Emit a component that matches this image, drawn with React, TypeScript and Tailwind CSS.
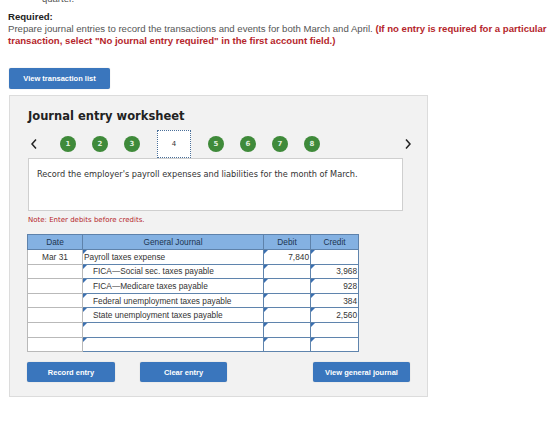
import React from "react";

type Line = { date: string; account: string; debit: string; credit: string; indent: boolean };

const lines: Line[] = [
  { date: "Mar 31", account: "Payroll taxes expense", debit: "7,840", credit: "", indent: false },
  { date: "", account: "FICA\u2014Social sec. taxes payable", debit: "", credit: "3,968", indent: true },
  { date: "", account: "FICA\u2014Medicare taxes payable", debit: "", credit: "928", indent: true },
  { date: "", account: "Federal unemployment taxes payable", debit: "", credit: "384", indent: true },
  { date: "", account: "State unemployment taxes payable", debit: "", credit: "2,560", indent: true },
  { date: "", account: "", debit: "", credit: "", indent: false },
  { date: "", account: "", debit: "", credit: "", indent: false },
];

const steps = [1, 2, 3, 4, 5, 6, 7, 8];

function Marker() {
  return (
    <span className="absolute left-0 top-0 h-0 w-0 border-t-[4px] border-r-[4px] border-t-[#3a6fb0] border-r-transparent" />
  );
}

function Chevron({ dir }: { dir: "left" | "right" }) {
  return (
    <svg width="8" height="12" viewBox="0 0 8 12" className="shrink-0">
      <path
        d={dir === "left" ? "M6 1.5 L2 6 L6 10.5" : "M2 1.5 L6 6 L2 10.5"}
        fill="none"
        stroke="#222"
        strokeWidth="1.5"
      />
    </svg>
  );
}

function BlueButton({ label, className }: { label: string; className: string }) {
  return (
    <button
      className={`${className} block h-[20px] rounded-[2px] bg-[#3a76bd] text-[7.5px] font-bold text-white shadow-[0_0_1px_rgba(0,0,0,0.3)]`}
    >
      {label}
    </button>
  );
}

export default function App() {
  return (
    <div className="h-[422px] w-[560px] overflow-hidden bg-white font-['Liberation_Sans',Arial,sans-serif]">
      <p className="-mt-[7px] pl-[42px] text-[9.5px] leading-[11px] text-[#555]">quarter.</p>

      <div className="mt-[7px] whitespace-nowrap px-[8px] text-[9.6px] leading-[12px]">
        <p className="font-bold text-[#222]">Required:</p>
        <p className="text-[#555]">
          Prepare journal entries to record the transactions and events for both March and April.{" "}
          <span className="font-bold text-[#b5262b]">
            (If no entry is required for a particular
            <br />
            transaction, select "No journal entry required" in the first account field.)
          </span>
        </p>
      </div>

      <button className="ml-[9px] mt-[21px] block h-[21px] w-[101px] rounded-[2px] bg-[#3a76bd] text-[7.5px] font-bold text-white shadow-[0_0_1px_rgba(0,0,0,0.3)]">
        View transaction list
      </button>

      <section className="ml-[9px] mt-[6px] h-[302px] w-[419px] border border-[#dcdcdc] bg-[#f2f2f2] pl-[18px] pt-[12px] font-['DejaVu_Sans',Verdana,sans-serif]">
        <h2 className="text-[11.5px] font-bold leading-[16px] text-[#222]">Journal entry worksheet</h2>

        {/* step navigation */}
        <div className="mt-[6px] flex h-[28px] items-center">
          <div className="ml-[2px]">
            <Chevron dir="left" />
          </div>
          <div className="ml-[22px] flex items-center gap-[16px]">
            {steps.map((n) =>
              n === 4 ? (
                <div
                  key={n}
                  className="mx-[1px] flex h-[28px] w-[34px] items-center justify-center border border-dotted border-[#4a6f99] bg-white text-[7px] text-[#333]"
                >
                  {n}
                </div>
              ) : (
                <div
                  key={n}
                  className="flex h-[16px] w-[16px] items-center justify-center rounded-full bg-[#3f8a3a] text-[7px] font-bold text-[#dfeedd]"
                >
                  {n}
                </div>
              )
            )}
          </div>
          <div className="ml-[84px]">
            <Chevron dir="right" />
          </div>
        </div>

        <div className="h-[53px] w-[375px] border border-[#cfcfcf] bg-white px-[8px] pt-[10px] text-[8.2px] leading-[10px] text-[#333]">
          Record the employer's payroll expenses and liabilities for the month of March.
        </div>

        <p className="mt-[4px] text-[7px] leading-[10px] text-[#b5262b]">Note: Enter debits before credits.</p>

        <table className="-ml-px mt-[9px] w-[331px] table-fixed border-collapse border border-[#a9a9a9] font-['Liberation_Sans',Arial,sans-serif] text-[8.3px]">
          <colgroup>
            <col className="w-[55px]" />
            <col className="w-[181px]" />
            <col className="w-[47px]" />
            <col className="w-[48px]" />
          </colgroup>
          <thead>
            <tr className="h-[15px] bg-[#84b1e2] text-[#1d3550]">
              <th className="border border-[#5e82ab] font-normal">Date</th>
              <th className="border border-[#5e82ab] font-normal">General Journal</th>
              <th className="border border-[#5e82ab] font-normal">Debit</th>
              <th className="border border-[#5e82ab] font-normal">Credit</th>
            </tr>
          </thead>
          <tbody>
            {lines.map((l, i) => (
              <tr key={i} className="h-[14.6px] bg-white text-[#333]">
                <td className="border border-[#b9b9b9] text-center leading-[12px]">{l.date}</td>
                <td
                  className={`relative border-[1.5px] border-[#5f84ad] leading-[12px] ${l.indent ? "pl-[10px]" : "pl-[1px]"}`}
                >
                  <Marker />
                  {l.account}
                </td>
                <td className="relative border-[1.5px] border-[#5f84ad] pr-[1px] text-right leading-[12px]">
                  <Marker />
                  {l.debit}
                </td>
                <td className="relative border-[1.5px] border-[#5f84ad] pr-[1px] text-right leading-[12px]">
                  <Marker />
                  {l.credit}
                </td>
              </tr>
            ))}
          </tbody>
        </table>

        <div className="-ml-px mt-[10px] flex items-start font-['Liberation_Sans',Arial,sans-serif]">
          <BlueButton label="Record entry" className="w-[88px]" />
          <BlueButton label="Clear entry" className="ml-[25px] w-[87px]" />
          <BlueButton label="View general journal" className="ml-[86px] w-[97px]" />
        </div>
      </section>
    </div>
  );
}
